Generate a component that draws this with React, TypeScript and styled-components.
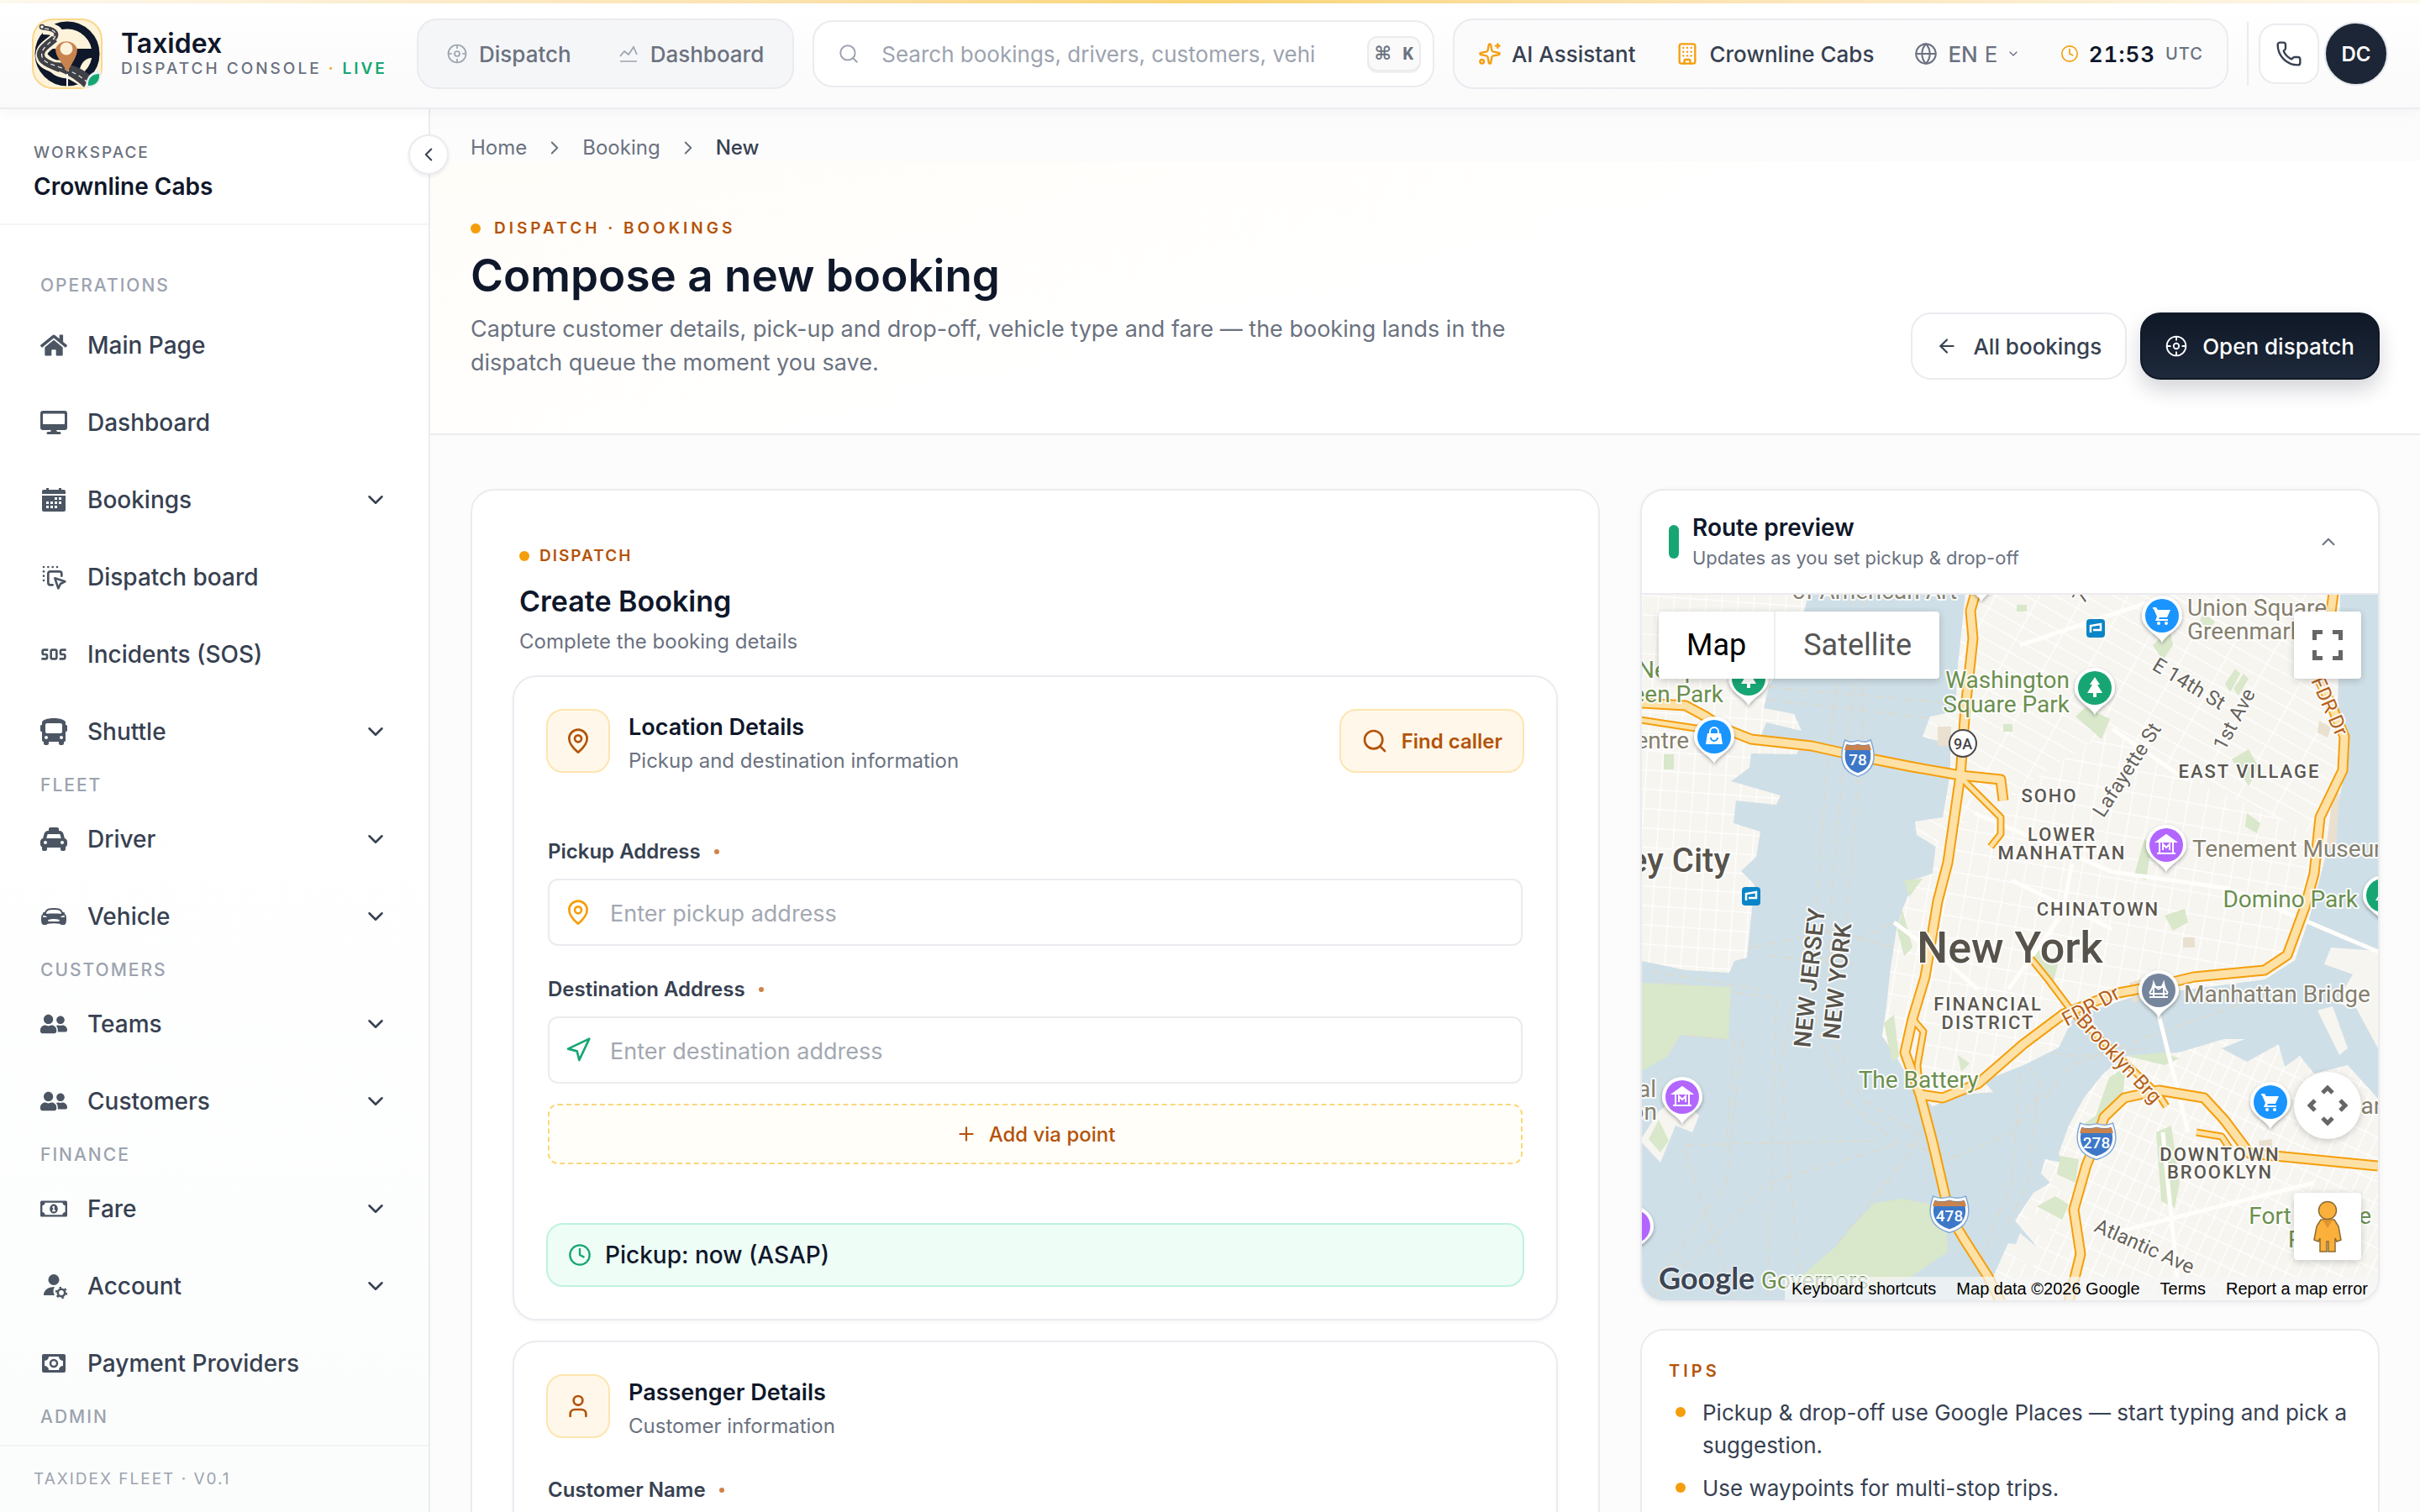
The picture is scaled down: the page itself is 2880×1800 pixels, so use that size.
import React from "react";
import styled, { createGlobalStyle, css } from "styled-components";
import {
  ArrowLeft, Building, ChevronDown, ChevronLeft, ChevronRight, ChevronUp, Clock, Globe,
  MapPin, Navigation, Phone, Plus, Search, Sparkles, User,
} from "lucide-react";
import { FaHome, FaBus, FaTaxi, FaUserFriends, FaRegMoneyBillAlt } from "react-icons/fa";
import { IoCarSport } from "react-icons/io5";
import { MdSos } from "react-icons/md";
import { TbDragDrop } from "react-icons/tb";

const ink = "#0f172a";
const slate = "#374151";
const muted = "#6b7280";
const faint = "#9ca3af";
const line = "#ebebf0";
const amber = "#f59e0b";
const rust = "#b45309";
const green = "#17a673";

const GlobalStyle = createGlobalStyle`
  * { box-sizing: border-box; }
  body {
    margin: 0;
    font-family: Inter, "Liberation Sans", sans-serif;
    font-size: 28px;
    color: ${ink};
    background: #fcfcfc;
    -webkit-font-smoothing: antialiased;
  }
  button, input, select { font: inherit; color: inherit; margin: 0; }
  button { cursor: pointer; }
  a { color: inherit; text-decoration: none; }
  h1, h2, h3, p, ul { margin: 0; padding: 0; }
  ul { list-style: none; }
`;

/* ---------- shell ---------- */

const Shell = styled.div`
  display: flex;
  flex-direction: column;
  height: 100vh;
  overflow: hidden;
`;

const Body = styled.div`
  display: flex;
  flex: 1;
  min-height: 0;
`;

/* ---------- header ---------- */

const AccentBar = styled.div`
  height: 4px;
  flex: none;
  background: linear-gradient(90deg, #fffaf0 0%, #fde3ae 33%, #fbd777 50%, #fde3ae 67%, #fffaf0 100%);
`;

const Header = styled.header`
  display: flex;
  align-items: center;
  gap: 22px;
  flex: none;
  height: 126px;
  padding: 0 38px 4px;
  background: linear-gradient(#ffffff, #fafafb);
  border-bottom: 2px solid ${line};
  box-shadow: 0 4px 16px rgba(15, 23, 42, 0.04);
  position: relative;
  z-index: 2;
`;

const Brand = styled.a`
  display: flex;
  align-items: center;
  gap: 22px;
  width: 436px;
  flex: none;
`;

const BrandName = styled.div`
  font-size: 32px;
  line-height: 36px;
  font-weight: 600;
`;

const BrandTag = styled.div`
  font-size: 19px;
  line-height: 24px;
  font-weight: 500;
  letter-spacing: 3px;
  color: ${muted};
  white-space: nowrap;
  i { font-style: normal; color: ${amber}; }
  b { font-weight: 600; color: ${green}; }
`;

const Pill = styled.nav<{ $tone: string; $inset?: number }>`
  display: flex;
  align-items: center;
  gap: 4px;
  flex: none;
  height: 84px;
  padding: 0 ${(p) => p.$inset || 8}px;
  border: 2px solid ${line};
  border-radius: 24px;
  background: ${(p) => p.$tone};
`;

const pillItem = css`
  display: flex;
  align-items: center;
  gap: 12px;
  height: 64px;
  padding: 0 22px;
  border: 0;
  background: none;
  font-size: 26px;
  font-weight: 500;
  white-space: nowrap;
`;

const PillLink = styled.a`
  ${pillItem}
  gap: 14px;
  padding: 0 26px;
  color: ${muted};
  svg { color: ${faint}; }
`;

const PillButton = styled.button`
  ${pillItem}
  color: ${slate};
  svg { color: ${amber}; }
`;

const Language = styled.label`
  ${pillItem}
  color: ${muted};
  select {
    appearance: none;
    width: 18px;
    border: 0;
    padding: 0;
    margin: 0 -4px;
    background: none;
    color: ${muted};
    font-weight: 400;
  }
`;

const Time = styled.div`
  ${pillItem}
  b { font-weight: 600; letter-spacing: 1px; font-variant-numeric: tabular-nums; }
  span { font-size: 20px; letter-spacing: 1px; color: ${muted}; }
  svg { color: ${amber}; }
`;

const SearchBox = styled.label`
  display: flex;
  align-items: center;
  flex: 1;
  min-width: 0;
  height: 80px;
  padding: 0 14px 0 28px;
  border: 2px solid ${line};
  border-radius: 24px;
  background: #fff;
  color: ${faint};
  input {
    flex: 1;
    min-width: 0;
    margin: 0 48px 0 26px;
    padding: 0;
    border: 0;
    outline: 0;
    background: none;
    font-size: 26px;
  }
  input::placeholder { color: ${faint}; opacity: 1; }
  kbd {
    display: flex;
    align-items: center;
    justify-content: center;
    width: 64px;
    height: 42px;
    border: 2px solid ${line};
    border-radius: 12px;
    background: #fafafa;
    box-shadow: 0 2px 0 #f1f1f4;
    font: 600 22px "Liberation Mono", "DejaVu Sans", monospace;
    color: ${muted};
  }
`;

const HeaderEnd = styled.div`
  display: flex;
  align-items: center;
  gap: 6px;
  flex: none;
  padding-left: 12px;
  border-left: 2px solid ${line};
`;

const IconButton = styled.button`
  display: flex;
  align-items: center;
  justify-content: center;
  width: 72px;
  height: 72px;
  border: 2px solid ${line};
  border-radius: 20px;
  background: #fff;
  color: ${slate};
`;

const Avatar = styled.button`
  width: 76px;
  height: 76px;
  padding: 0;
  border: 2px solid #e3e5ea;
  border-radius: 50%;
  background: #1c2636;
  color: #fff;
  font-size: 24px;
  font-weight: 600;
`;

/* ---------- sidebar ---------- */

const Sidebar = styled.aside`
  display: flex;
  flex-direction: column;
  flex: none;
  width: 512px;
  position: relative;
  border-right: 2px solid ${line};
  background: linear-gradient(#ffffff 40%, #fbfdfc);
`;

const Workspace = styled.div`
  padding: 36px 40px 24px;
  border-bottom: 2px solid #f5f5f7;
`;

const Overline = styled.div`
  font-size: 19px;
  line-height: 32px;
  font-weight: 500;
  letter-spacing: 2px;
  color: ${muted};
`;

const WorkspaceName = styled.div`
  margin-top: 4px;
  font-size: 28px;
  line-height: 40px;
  font-weight: 600;
`;

const Collapse = styled.button`
  position: absolute;
  top: 30px;
  right: -24px;
  z-index: 1;
  display: flex;
  align-items: center;
  justify-content: center;
  width: 48px;
  height: 48px;
  padding: 0;
  border: 2px solid ${line};
  border-radius: 50%;
  background: #fff;
  box-shadow: 0 2px 4px rgba(15, 23, 42, 0.08);
  color: ${slate};
`;

const Nav = styled.nav`
  flex: 1;
  min-height: 0;
  overflow: hidden;
  padding: 54px 48px 0;
`;

const GroupLabel = styled.h3`
  font-size: 21px;
  line-height: 36px;
  font-weight: 500;
  letter-spacing: 2px;
  color: ${faint};
  &:first-child { margin-bottom: 7px; }
`;

const NavRow = styled.a`
  display: flex;
  align-items: center;
  height: 92px;
  font-size: 28px;
  font-weight: 500;
  color: ${slate};
  > svg:first-child { width: 32px; height: 32px; color: #4b5563; }
  span { flex: 1; margin-left: 24px; }
`;

const SideFooter = styled.div`
  padding: 22px 40px;
  border-top: 2px solid #f3f4f6;
  font-size: 19px;
  line-height: 34px;
  letter-spacing: 2px;
  color: ${faint};
`;

/* ---------- main ---------- */

const Main = styled.main`
  flex: 1;
  min-width: 0;
  overflow: hidden;
`;

const Crumbs = styled.nav`
  display: flex;
  align-items: center;
  gap: 20px;
  height: 62px;
  padding: 30px 48px 0;
  font-size: 24px;
  line-height: 32px;
  color: ${muted};
  b { font-weight: 500; color: ${slate}; }
`;

const Hero = styled.section`
  display: flex;
  align-items: flex-end;
  justify-content: space-between;
  padding: 64px 48px;
  border-bottom: 2px solid ${line};
  background: linear-gradient(165deg, #fffdf8 0%, #ffffff 50%);
`;

const Eyebrow = styled.div<{ $gap?: number }>`
  display: flex;
  align-items: center;
  gap: ${(p) => p.$gap || 12}px;
  font-size: 19px;
  line-height: 32px;
  font-weight: 600;
  letter-spacing: ${(p) => (p.$gap ? 4 : 2)}px;
  color: ${rust};
  &::before {
    content: "";
    width: 12px;
    height: 12px;
    border-radius: 50%;
    background: ${amber};
  }
`;

const Title = styled.h1`
  margin-top: 8px;
  font-size: 53px;
  line-height: 64px;
  font-weight: 600;
`;

const Lead = styled.p`
  max-width: 1280px;
  margin-top: 12px;
  font-size: 27px;
  line-height: 40px;
  color: ${muted};
`;

const Actions = styled.div`
  display: flex;
  gap: 16px;
  flex: none;
`;

const Action = styled.a<{ $dark?: boolean }>`
  display: flex;
  align-items: center;
  gap: 18px;
  height: 80px;
  padding: 0 28px;
  border: 2px solid ${(p) => (p.$dark ? "#111a28" : line)};
  border-radius: 24px;
  background: ${(p) => (p.$dark ? "linear-gradient(#0f1826, #1e293b)" : "#fff")};
  box-shadow: ${(p) => (p.$dark ? "0 12px 24px rgba(15, 23, 42, 0.18)" : "none")};
  color: ${(p) => (p.$dark ? "#fff" : slate)};
  font-size: 26px;
  font-weight: 500;
`;

const Columns = styled.div`
  display: grid;
  grid-template-columns: minmax(0, 1fr) 880px;
  align-items: start;
  gap: 48px;
  padding: 64px 48px;
`;

const Card = styled.section`
  border: 2px solid ${line};
  border-radius: 28px;
  background: #fff;
`;

const FormCard = styled(Card)`
  padding: 62px 48px 48px;
`;

const FormHead = styled.div`
  padding: 0 8px;
  margin-bottom: 24px;
  h2 { margin-top: 16px; font-size: 34px; line-height: 44px; font-weight: 600; }
  p { margin-top: 10px; font-size: 24px; line-height: 32px; color: ${muted}; }
`;

const Panel = styled(Card)`
  padding: 38px;
  box-shadow: 0 2px 4px rgba(15, 23, 42, 0.04);
  & + & { margin-top: 24px; }
`;

const PanelHead = styled.div`
  display: flex;
  align-items: flex-start;
  gap: 22px;
`;

const Tile = styled.div`
  display: flex;
  align-items: center;
  justify-content: center;
  flex: none;
  width: 76px;
  height: 76px;
  border: 2px solid #fde5b0;
  border-radius: 20px;
  background: #fff8ea;
  color: ${rust};
`;

const PanelTitle = styled.div`
  flex: 1;
  padding-top: 4px;
  h3 { font-size: 27px; line-height: 36px; font-weight: 600; }
  p { margin-top: 4px; font-size: 24px; line-height: 36px; color: ${muted}; }
`;

const FindCaller = styled.button`
  display: flex;
  align-items: center;
  gap: 16px;
  height: 76px;
  padding: 0 24px;
  border: 2px solid #fde5b0;
  border-radius: 20px;
  background: #fff8ea;
  color: ${rust};
  font-size: 24px;
  font-weight: 600;
`;

const Fields = styled.div<{ $top: number }>`
  display: flex;
  flex-direction: column;
  padding: 0 2px;
  margin-top: ${(p) => p.$top}px;
`;

const Label = styled.label`
  display: flex;
  align-items: center;
  gap: 16px;
  margin-bottom: 16px;
  font-size: 24px;
  line-height: 32px;
  font-weight: 600;
  color: ${slate};
  &::after {
    content: "";
    width: 6px;
    height: 6px;
    border-radius: 50%;
    background: #d0824a;
  }
`;

const Control = styled.div<{ $color: string }>`
  display: flex;
  align-items: center;
  gap: 22px;
  height: 80px;
  margin-bottom: 36px;
  padding: 0 18px;
  border: 2px solid ${line};
  border-radius: 12px;
  background: #fff;
  color: ${(p) => p.$color};
  input {
    flex: 1;
    padding: 2px 0 0;
    border: 0;
    outline: 0;
    background: none;
    font-size: 27px;
    color: ${ink};
  }
  input::placeholder { color: #a3a8b1; opacity: 1; }
  &:has(+ button) { margin-bottom: 24px; }
`;

const AddVia = styled.button`
  display: flex;
  align-items: center;
  justify-content: center;
  gap: 14px;
  height: 72px;
  border: 2px dashed #fbd77c;
  border-radius: 12px;
  background: #fffef9;
  color: ${rust};
  font-size: 24px;
  font-weight: 500;
`;

const PickupNow = styled.button`
  display: flex;
  align-items: center;
  gap: 16px;
  width: 100%;
  height: 76px;
  margin-top: 70px;
  padding: 0 24px;
  border: 2px solid #bff3dd;
  border-radius: 20px;
  background: #effdf7;
  font-size: 28px;
  font-weight: 500;
  svg { color: ${green}; }
`;

/* ---------- right column ---------- */

const Aside = styled.div`
  display: flex;
  flex-direction: column;
  gap: 32px;
`;

const MapCard = styled(Card)`
  overflow: hidden;
  box-shadow: 0 2px 6px rgba(15, 23, 42, 0.06);
`;

const MapHead = styled.div`
  display: flex;
  align-items: center;
  gap: 16px;
  padding: 26px 46px 26px 32px;
  border-bottom: 2px solid ${line};
  &::before {
    content: "";
    width: 12px;
    height: 40px;
    border-radius: 6px;
    background: ${green};
  }
  h2 { font-size: 28px; line-height: 36px; font-weight: 600; }
  p { margin-top: 2px; font-size: 22px; line-height: 32px; color: ${muted}; }
  div { flex: 1; }
  button { display: flex; padding: 0; border: 0; background: none; color: ${muted}; }
`;

const MapArea = styled.div`
  position: relative;
  height: 840px;
  overflow: hidden;
  background: #cfdfe7;
  font-family: Roboto, sans-serif;
  > svg { display: block; width: 100%; height: 100%; }
`;

const MapTypes = styled.div`
  position: absolute;
  top: 20px;
  left: 20px;
  display: flex;
  border-radius: 4px;
  background: #fff;
  box-shadow: 0 2px 8px rgba(0, 0, 0, 0.2);
  button {
    height: 80px;
    padding: 0 33px;
    border: 0;
    background: none;
    font-size: 36px;
    color: #565656;
  }
  button:first-child { color: #000; border-right: 2px solid #eceef2; }
`;

const MapButton = styled.button<{ $top: number; $round?: boolean }>`
  position: absolute;
  top: ${(p) => p.$top}px;
  right: 20px;
  display: flex;
  align-items: center;
  justify-content: center;
  width: 80px;
  height: 80px;
  padding: 0;
  border: 0;
  border-radius: ${(p) => (p.$round ? "50%" : "4px")};
  background: #fff;
  box-shadow: 0 2px 8px rgba(0, 0, 0, 0.2);
`;

const Attribution = styled.div`
  position: absolute;
  right: 0;
  bottom: 0;
  display: flex;
  gap: 24px;
  height: 28px;
  padding: 0 12px 0 8px;
  background: rgba(245, 246, 247, 0.72);
  font-family: "Liberation Sans", Arial, sans-serif;
  font-size: 20px;
  line-height: 28px;
  color: #000;
  white-space: nowrap;
  button { padding: 0; border: 0; background: none; line-height: 28px; }
`;

const MapLogo = styled.a`
  position: absolute;
  left: 20px;
  bottom: 6px;
  font-family: Lato, sans-serif;
  font-size: 36px;
  line-height: 42px;
  font-weight: 700;
  color: #3c4654;
  text-shadow: 0 0 3px #fff, 0 0 3px #fff, 0 0 2px #fff;
`;

const TipsCard = styled(Card)`
  padding: 32px;
  h2 { font-size: 20px; line-height: 32px; font-weight: 600; letter-spacing: 4px; color: ${rust}; }
  ul { display: flex; flex-direction: column; gap: 12px; margin-top: 14px; }
  li {
    position: relative;
    padding-left: 40px;
    font-size: 26px;
    line-height: 39px;
    color: ${slate};
  }
  li::before {
    content: "";
    position: absolute;
    left: 8px;
    top: 13px;
    width: 12px;
    height: 12px;
    border-radius: 50%;
    background: ${amber};
  }
`;

/* ---------- drawings ---------- */

const Logo = () => (
  <svg width="84" height="84" viewBox="0 0 84 84" aria-hidden="true">
    <rect x="1" y="1" width="82" height="82" rx="24" fill="#fdf3da" stroke="#fbd78a" strokeWidth="2" />
    <circle cx="42" cy="42" r="34" fill="none" stroke="#0f172a" strokeWidth="9" />
    <path d="M46 36 L76 36 L76 47 C66 46 60 50 57 60 L48 66 L40 50 Z" fill="#0f172a" />
    <path d="M18 36 L34 36 L38 48 C30 52 24 48 18 42 Z" fill="#0f172a" />
    <path d="M13 12 C27 12 34 16 28 24 C20 32 8 36 12 48 C18 60 44 58 68 80" fill="none" stroke="#fdf3da" strokeWidth="14" />
    <path d="M12 11 C27 12 32 17 27 24" fill="none" stroke="#3f4147" strokeWidth="5" />
    <path d="M27 24 C18 32 6 38 12 48 C16 54 26 56 34 60" fill="none" stroke="#3f4147" strokeWidth="9" />
    <path d="M24 52 C42 52 58 58 70 68 L62 82 C52 72 38 64 20 58 Z" fill="#3f4147" />
    <path d="M15 12 C27 13 31 17 26 24 C17 33 8 38 13 48 C20 58 44 56 66 76" fill="none" stroke="#fff" strokeWidth="1.2" strokeDasharray="5 4" />
    <circle cx="12" cy="10" r="2.5" fill="#fff" stroke="#3f4147" strokeWidth="1.5" />
    <path d="M42 64 C36 52 28 46 28 36 A14 14 0 0 1 54 36 C54 46 48 52 42 64 Z" fill="#c9834e" />
    <circle cx="41" cy="36" r="7.5" fill="#fdf3da" />
    <path d="M42 66 V81" stroke="#fff" strokeWidth="2" />
    <path d="M64 82 C64 68 72 62 82 62 L82 68 C82 76 76 82 68 82 Z" fill="#e8f1f4" />
    <path d="M67 80 C66 71 72 66 80 66 C81 74 76 80 67 80 Z" fill="#17a673" />
  </svg>
);

const Radar = ({ size = 24 }: { size?: number }) => (
  <svg width={size} height={size} viewBox="0 0 24 24" fill="none" stroke="currentColor" strokeWidth="1.7" aria-hidden="true">
    <circle cx="12" cy="12" r="10.5" />
    <circle cx="12" cy="12" r="3" />
    <path d="M12 1.5V6M12 18v4.5M1.5 12H6M18 12h4.5" />
  </svg>
);

const Trend = () => (
  <svg width="24" height="24" viewBox="0 0 24 24" fill="none" stroke="currentColor" strokeWidth="1.7" aria-hidden="true">
    <path d="M2 21h20M2 15l5-6 5 4 6-9 4 9" />
  </svg>
);

const MonitorIcon = () => (
  <svg viewBox="0 0 32 32" fill="currentColor" aria-hidden="true">
    <path fillRule="evenodd" d="M3 2h26a3 3 0 0 1 3 3v17a3 3 0 0 1-3 3H19l1 2h3a1.500 1.500 0 0 1 0 3H9a1.500 1.500 0 0 1 0-3h3l1-2H3a3 3 0 0 1-3-3V5a3 3 0 0 1 3-3zM4 5.500a1 1 0 0 0-1 1V17a1 1 0 0 0 1 1h24a1 1 0 0 0 1-1V6.500a1 1 0 0 0-1-1z" />
  </svg>
);

const CalendarIcon = () => (
  <svg viewBox="0 0 32 32" fill="currentColor" aria-hidden="true">
    <path d="M7 2h3v2h12V2h3v2h3a2 2 0 0 1 2 2v3H2V6a2 2 0 0 1 2-2h3z" />
    <path fillRule="evenodd" d="M2 11h28v17a2 2 0 0 1-2 2H4a2 2 0 0 1-2-2zM17 13v3h3v-3zM22 13v3h3v-3zM7 18v3h3v-3zM12 18v3h3v-3zM17 18v3h3v-3zM22 18v3h3v-3zM7 23v3h3v-3zM12 23v3h3v-3zM17 23v3h3v-3z" />
  </svg>
);

const AccountIcon = () => (
  <svg viewBox="0 0 32 32" fill="currentColor" aria-hidden="true">
    <circle cx="16" cy="8.500" r="6.500" />
    <path d="M4 27c0-6 5-10 13-10-2 3-2 7 0 10z" />
    <circle cx="25" cy="24" r="4.200" fill="none" stroke="currentColor" strokeWidth="2.600" />
    <circle cx="25" cy="24" r="6.300" fill="none" stroke="currentColor" strokeWidth="2" strokeDasharray="2.600 4" />
  </svg>
);

const CashIcon = () => (
  <svg viewBox="0 0 32 32" aria-hidden="true">
    <rect x="2" y="5" width="28" height="22" rx="2" fill="currentColor" />
    <path d="M10 8h12a5 5 0 0 0 5 5v6a5 5 0 0 0-5 5H10a5 5 0 0 0-5-5v-6a5 5 0 0 0 5-5z" fill="#fff" />
    <circle cx="16" cy="16" r="4" fill="none" stroke="currentColor" strokeWidth="2.5" />
  </svg>
);

type PinKind = "cart" | "tree" | "museum" | "bag" | "bridge" | "none";
const pinColors: Record<PinKind, string> = {
  cart: "#1a94ff", tree: "#17a673", museum: "#b266ff", bag: "#1a94ff", bridge: "#75859b", none: "#b266ff",
};

const glyphs: Record<PinKind, React.ReactNode> = {
  cart: (
    <g fill="#fff">
      <path d="M-11-10h4l2 3h15l-4 9h-9l-1 2h11v2H-8l2-5-4-9h-1z" />
      <circle cx="-4" cy="9" r="2" /><circle cx="5" cy="9" r="2" />
    </g>
  ),
  tree: <path d="M0-13L6-4H3L9 6H2v5h-4V6h-7l6-10h-3z" fill="#fff" />,
  museum: (
    <g fill="none" stroke="#fff" strokeWidth="2">
      <path d="M-11-4L0-12 11-4z" fill="#fff" />
      <path d="M-8-3V9M8-3V9M-11 10h22M-4 6V-1l4 4 4-4v7" />
    </g>
  ),
  bag: (
    <g>
      <path d="M-8-4H8L10 9h-20z" fill="#fff" />
      <path d="M-5-3v-3a5 5 0 0 1 10 0v3" fill="none" stroke="#fff" strokeWidth="2" />
      <path d="M-4 1a4 4 0 0 0 8 0" fill="none" stroke="#1a94ff" strokeWidth="2" />
    </g>
  ),
  bridge: <path d="M-6-10V9M6-10V9M-11 4h22M-6-4H6M-11 8h22M-11 3Q-7-2-6-9Q0 6 6-9Q7-2 11 3" fill="none" stroke="#fff" strokeWidth="2" />,
  none: null,
};

const Pin = ({ x, y, kind }: { x: number; y: number; kind: PinKind }) => (
  <g transform={`translate(${x} ${y})`}>
    <path d="M0 32C-4 22-24 16-24 0a24 24 0 0 1 48 0c0 16-20 22-24 32z" fill="#fff" filter="url(#drop)" />
    <circle r="20" fill={pinColors[kind]} />
    {glyphs[kind]}
  </g>
);

const Shield = ({ x, y, n, w = 20 }: { x: number; y: number; n: string; w?: number }) => {
  const shape = `M${-w + 2}-18Q${-w / 2}-15 0-18Q${w / 2}-15 ${w - 2}-18Q${w + 8} 12 0 20Q${-w - 8} 12 ${-w + 2}-18z`;
  return (
    <g transform={`translate(${x} ${y})`}>
      <path d={shape} fill="#3d78c8" stroke="#7fa9d8" strokeWidth="6" />
      <path d={shape} fill="#3d78c8" stroke="#fff" strokeWidth="3" />
      <path d={`M${-w + 2}-16Q${-w / 2}-13 0-16Q${w / 2}-13 ${w - 2}-16L${w}-9H${-w}z`} fill="#c9834e" />
      <text y="9" fontSize="19" fontWeight="500" fill="#fff" textAnchor="middle">{n}</text>
    </g>
  );
};

const Transit = ({ x, y }: { x: number; y: number }) => (
  <g transform={`translate(${x} ${y})`}>
    <rect width="22" height="22" rx="4" fill="#0a85c7" />
    <path d="M5 16V8l12-2v7H8" fill="none" stroke="#fff" strokeWidth="2.5" />
  </g>
);

type Spot = { t: string; x: number; y: number; k: "area" | "park" | "poi" | "city" | "road" | "hwy" | "state"; r?: number; s?: number; a?: "start" | "end" | "middle" };

const spots: Spot[] = [
  { t: "of American Art", x: 277, y: 5, k: "poi", a: "middle" },
  { t: "Union Square", x: 649, y: 25, k: "poi" },
  { t: "Greenmarket", x: 649, y: 53, k: "poi" },
  { t: "7th", x: 526, y: 12, k: "road", r: -60 },
  { t: "Washington", x: 509, y: 111, k: "park", a: "end" },
  { t: "Square Park", x: 509, y: 140, k: "park", a: "end" },
  { t: "Newport", x: -5, y: 99, k: "park" },
  { t: "Green Park", x: 97, y: 128, k: "park", a: "end" },
  { t: "Centre", x: 56, y: 183, k: "poi", a: "end" },
  { t: "E 14th St", x: 647, y: 113, k: "road", r: 31, a: "middle" },
  { t: "1st Ave", x: 712, y: 152, k: "road", r: -62, a: "middle" },
  { t: "Lafayette St", x: 584, y: 213, k: "road", r: -57, a: "middle" },
  { t: "FDR Dr", x: 811, y: 136, k: "hwy", r: 66, a: "middle" },
  { t: "EAST VILLAGE", x: 723, y: 218, k: "area", a: "middle" },
  { t: "SOHO", x: 485, y: 247, k: "area", a: "middle" },
  { t: "LOWER", x: 500, y: 293, k: "area", a: "middle" },
  { t: "MANHATTAN", x: 500, y: 315, k: "area", a: "middle" },
  { t: "Tenement Museum", x: 655, y: 312, k: "poi" },
  { t: "Jersey City", x: 105, y: 330, k: "city", s: 40, a: "end" },
  { t: "Domino Park", x: 852, y: 372, k: "park", a: "end" },
  { t: "CHINATOWN", x: 543, y: 382, k: "area", a: "middle" },
  { t: "New York", x: 438, y: 438, k: "city", s: 52, a: "middle" },
  { t: "NEW JERSEY", x: 209, y: 457, k: "state", r: -84, a: "middle" },
  { t: "NEW YORK", x: 242, y: 461, k: "state", r: -84, a: "middle" },
  { t: "FINANCIAL", x: 412, y: 495, k: "area", a: "middle" },
  { t: "DISTRICT", x: 412, y: 517, k: "area", a: "middle" },
  { t: "FDR Dr", x: 538, y: 497, k: "hwy", r: -28, a: "middle" },
  { t: "Brooklyn Brg", x: 562, y: 558, k: "hwy", r: 47, a: "middle" },
  { t: "Manhattan Bridge", x: 645, y: 485, k: "poi" },
  { t: "The Battery", x: 329, y: 587, k: "park", a: "middle" },
  { t: "al", x: 17, y: 598, k: "poi", a: "end" },
  { t: "on", x: 18, y: 625, k: "poi", a: "end" },
  { t: "Bar", x: 838, y: 618, k: "poi" },
  { t: "DOWNTOWN", x: 688, y: 674, k: "area", a: "middle" },
  { t: "BROOKLYN", x: 688, y: 695, k: "area", a: "middle" },
  { t: "Atlantic Ave", x: 595, y: 783, k: "road", r: 24, a: "middle" },
  { t: "Fort Greene", x: 868, y: 749, k: "park", a: "end" },
  { t: "Park", x: 769, y: 777, k: "park" },
  { t: "Governors", x: 142, y: 826, k: "park" },
];

const spotStyle = {
  area: { fontSize: 22, fontWeight: 500, fill: "#5b5850", letterSpacing: 2 },
  park: { fontSize: 28, fontWeight: 400, fill: "#6b8f4e" },
  poi: { fontSize: 28, fontWeight: 400, fill: "#857f6e" },
  city: { fontSize: 40, fontWeight: 500, fill: "#57534b" },
  road: { fontSize: 24, fontWeight: 400, fill: "#66625a" },
  hwy: { fontSize: 24, fontWeight: 400, fill: "#b4601c" },
  state: { fontSize: 28, fontWeight: 500, fill: "#57534b" },
};

const highways = [
  "M397-2L391 19 394 52 385 135 379 215 364 319 352 365 337 455 322 505 313 545 331 595 346 652 366 738 382 765 412 812 427 842",
  "M-2 129L52 132 76 145 97 159 130 172 202 180 256 192 322 205 379 215 427 220 430 245",
  "M-2 149L64 159 97 159",
  "M379 217L427 265 427 285 415 300",
  "M331 595L358 599 400 582 454 535 502 499 562 475 615 465 657 455 741 447 768 429 789 372 800 332 807 265 834 209 836 169 822 135 807 102 816 52 823-2",
  "M463 433L484 459 514 499 615 595 624 609",
  "M508 842L522 785 514 732 529 679 541 650 550 622 574 599 615 590 669 599 693 625 723 665 876 680",
  "M322 505L335 520 328 560 331 595",
  "M660 640L690 645 700 660M690 625L705 640",
];

const manhattan = "M385-2L376 85 373 139 343 145 334 169 367 178 367 212 358 265 325 270 327 286 350 300 346 332 325 339 310 375 303 400 296 445 291 492 286 525 304 552 325 589 346 609 376 595 418 592 406 579 454 560 496 539 514 502 586 478 741 458 777 435 795 382 816 302 828 252 842 185 828 135 831-2z";
const jersey = "M-2-2H199L190 30 151 110 145 135 181 142 190 162 148 152 140 172 190 178 184 190 130 189 128 206 106 222 165 239 160 250 112 245 109 272 141 282 136 312 118 329 134 345 125 432 110 436 104 450 52 447 20 440-2 436z";
const brooklyn = "M577 549L639 545 693 529 756 529 765 562 783 549 800 570 840 560 876 600V842H400L418 812 436 772 470 776 444 745 466 712 486 700 475 689 480 672 500 676 496 665 508 632 526 599 550 569z";

const MapDrawing = () => (
  <svg viewBox="0 0 876 840" preserveAspectRatio="xMidYMid slice" role="img" aria-label="Map of New York">
    <defs>
      <filter id="drop" x="-30%" y="-30%" width="160%" height="160%">
        <feDropShadow dx="0" dy="2" stdDeviation="2" floodOpacity="0.35" />
      </filter>
      <pattern id="gridA" width="46" height="17" patternUnits="userSpaceOnUse" patternTransform="rotate(29)">
        <path d="M0 0H46M0 0V17" stroke="#fff" strokeWidth="2.5" />
      </pattern>
      <pattern id="gridB" width="24" height="15" patternUnits="userSpaceOnUse" patternTransform="rotate(-65)">
        <path d="M0 0H24M0 0V15" stroke="#fff" strokeWidth="2.5" />
      </pattern>
      <pattern id="gridC" width="22" height="26" patternUnits="userSpaceOnUse" patternTransform="rotate(10)">
        <path d="M0 0H22M0 0V26" stroke="#fff" strokeWidth="2.5" />
      </pattern>
      <pattern id="gridD" width="19" height="23" patternUnits="userSpaceOnUse" patternTransform="rotate(4)">
        <path d="M0 0H19M0 0V23" stroke="#fff" strokeWidth="2.5" />
      </pattern>
      <clipPath id="lower"><path d="M340 300L560 160 640 215 835 300V620H280V300z" /></clipPath>
    </defs>
    <rect width="876" height="840" fill="#cfdfe7" />
    <g fill="none" stroke="#dcd9cd" strokeWidth="1.5" strokeDasharray="12 6">
      <path d="M250 0L222 180 205 420 208 520 240 600 300 650 370 670 440 640 476 590 450 540" />
      <path d="M270 0L240 200 220 430 224 520 262 600 340 650M262 0L262 180 236 460" />
      <path d="M130 420L230 400 300 420M150 430L260 440M20 460L160 480 150 840M-2 520L110 530 100 660" />
      <path d="M50 655L280 650M50 660L110 840M300 655L150 700 10 840M330 650L180 840M450 570L440 700 400 800" />
      <path d="M452 540L520 550 600 540M470 600L460 700 430 760M480 600L510 560 620 520 760 470" />
      <path d="M150 110L380 130M150 125L370 150M190 445L300 390M10 448L140 470" />
      <path d="M190 840L165 560 180 480M120 530L100 700 10 830" />
    </g>
    <path d={jersey} fill="#f7f5f0" />
    <path d={jersey} fill="url(#gridD)" />
    <path d={manhattan} fill="#f7f5f0" />
    <path d={manhattan} fill="url(#gridA)" />
    <path d={manhattan} fill="#f7f5f0" clipPath="url(#lower)" />
    <path d={manhattan} fill="url(#gridC)" clipPath="url(#lower)" />
    <path d={brooklyn} fill="#f7f5f0" />
    <path d={brooklyn} fill="url(#gridB)" />
    <path d="M876 424L820 420 812 440 846 452 826 486 850 492 876 540zM804 495L822 490 840 540 830 548z" fill="#f7f5f0" />
    <g fill="#f7f5f0">
      <path d="M464 735L490 748 478 764 452 756zM450 760L474 780 464 800 440 786zM500 690L530 700 520 718 494 708z" />
      <path d="M690 540L790 500 800 512 720 556z" fill="#cfdfe7" />
      <path d="M-2 650L20 615 44 598 68 620 60 640 40 632 22 676z" />
    </g>
    <g fill="#d9e7ca">
      <path d="M-2 462L106 467 103 529 46 524 30 550-2 568z" />
      <path d="M277 724L310 719 361 729 364 782 320 812 244 836 184 816 232 775 250 752z" />
      <path d="M8 648L20 625 32 650 22 664z" />
      <path d="M288 510L300 500 306 550 298 556zM310 375L322 420 312 430 304 400zM312 340L334 338 318 360z" />
      <path d="M516 145L528 134 557 148 547 172zM702 196L722 184 734 205 722 228z" />
      <path d="M446 12H458V20H446zM430 154H441V163H430zM608 60L628 40 632 60 620 78zM668 22L682 32 674 44 664 30z" />
      <path d="M694 106L706 88 712 94 700 116zM704 112L716 94 722 100 710 120zM26 190H38V208H26z" />
      <path d="M622 382L646 374 650 390 632 400zM586 334L598 290 606 300 600 340zM466 420L496 436 490 460 470 444z" />
      <path d="M556 575L576 562 572 600 545 640 524 650 518 636 540 620zM577 549L620 545 640 552 622 560zM498 668L520 672 516 700 494 690z" />
      <path d="M612 640L630 632 640 700 634 730 618 722zM376 548L390 558 380 568zM720 260L736 272 732 284 718 276z" />
      <path d="M470 728L492 716 508 726 500 744z" />
    </g>
    <g fill="#e9e0d0">
      <path d="M352 157H368V180H352zM806 150L820 158 816 170 804 164zM822 240L830 236 826 300 814 304z" />
      <path d="M644 408H658V420H644zM580 462L594 458 598 480 584 486zM734 650L750 648V664H736z" />
    </g>
    <path d="M705 352L876 425M615 500L650 640M300 390L366 440 400 470M440 340L560 398M436 470L500 380 512 320M560 160L640 215M450 60L600 10M396 260L560 330 700 350M620 640L640 840M560 760L800 700" fill="none" stroke="#fffefb" strokeWidth="5" />
    <g fill="none" stroke={amber} strokeLinejoin="round">{highways.map((d) => <path key={d} d={d} strokeWidth={d.length > 60 ? 13 : 9} />)}</g>
    <g fill="none" stroke="#fde1a6" strokeLinejoin="round">{highways.map((d) => <path key={d} d={d} strokeWidth={d.length > 60 ? 9 : 5} />)}</g>
    <g stroke="#fff" strokeWidth="4" strokeLinejoin="round" paintOrder="stroke" strokeOpacity="0.85">
      {spots.map((s) => (
        <text
          key={s.t + s.x}
          x={s.x}
          y={s.y}
          textAnchor={s.a || "start"}
          transform={s.r ? `rotate(${s.r} ${s.x} ${s.y})` : undefined}
          {...spotStyle[s.k]}
          fontSize={s.s || spotStyle[s.k].fontSize}
        >
          {s.t}
        </text>
      ))}
    </g>
    <Transit x={529} y={29} />
    <Transit x={119} y={348} />
    <circle cx="382" cy="177" r="16" fill="#fff" stroke="#4b4b4b" strokeWidth="2" />
    <text x="382" y="184" fontSize="18" fontWeight="500" fill="#444" textAnchor="middle">9A</text>
    <Shield x={257} y={194} n="78" w={16} />
    <Shield x={541} y={650} n="278" />
    <Shield x={366} y={737} n="478" />
    <Pin x={404} y={-24} kind="museum" />
    <Pin x={619} y={25} kind="cart" />
    <Pin x={539} y={111} kind="tree" />
    <Pin x={127} y={100} kind="tree" />
    <Pin x={86} y={169} kind="bag" />
    <Pin x={624} y={298} kind="museum" />
    <Pin x={882} y={358} kind="tree" />
    <Pin x={615} y={471} kind="bridge" />
    <Pin x={48} y={598} kind="museum" />
    <Pin x={748} y={604} kind="cart" />
    <Pin x={-10} y={752} kind="none" />
  </svg>
);

/* ---------- sections ---------- */

type Item = { label: string; icon: React.ReactNode; more?: boolean };
const groups: { name: string; items: Item[] }[] = [
  {
    name: "OPERATIONS",
    items: [
      { label: "Main Page", icon: <FaHome /> },
      { label: "Dashboard", icon: <MonitorIcon /> },
      { label: "Bookings", icon: <CalendarIcon />, more: true },
      { label: "Dispatch board", icon: <TbDragDrop /> },
      { label: "Incidents (SOS)", icon: <MdSos /> },
      { label: "Shuttle", icon: <FaBus />, more: true },
    ],
  },
  { name: "FLEET", items: [{ label: "Driver", icon: <FaTaxi />, more: true }, { label: "Vehicle", icon: <IoCarSport />, more: true }] },
  { name: "CUSTOMERS", items: [{ label: "Teams", icon: <FaUserFriends />, more: true }, { label: "Customers", icon: <FaUserFriends />, more: true }] },
  {
    name: "FINANCE",
    items: [
      { label: "Fare", icon: <FaRegMoneyBillAlt />, more: true },
      { label: "Account", icon: <AccountIcon />, more: true },
      { label: "Payment Providers", icon: <CashIcon /> },
    ],
  },
  { name: "ADMIN", items: [] },
];

const TopBar = () => (
  <Header>
    <Brand href="#home">
      <Logo />
      <div>
        <BrandName>Taxidex</BrandName>
        <BrandTag>DISPATCH CONSOLE <i>·</i> <b>LIVE</b></BrandTag>
      </div>
    </Brand>
    <Pill $tone="#f5f6f8">
      <PillLink href="#dispatch"><Radar />Dispatch</PillLink>
      <PillLink href="#dashboard"><Trend />Dashboard</PillLink>
    </Pill>
    <SearchBox>
      <Search size={26} strokeWidth={1.8} />
      <input aria-label="Search" placeholder="Search bookings, drivers, customers, vehi" />
      <kbd>⌘ K</kbd>
    </SearchBox>
    <Pill as="div" $tone="#fbfbfc" $inset={6}>
      <PillButton><Sparkles size={28} />AI Assistant</PillButton>
      <PillButton><Building size={28} />Crownline Cabs</PillButton>
      <Language>
        <Globe size={28} strokeWidth={1.8} />EN
        <select aria-label="Language"><option>E</option></select>
        <ChevronDown size={16} />
      </Language>
      <Time><Clock size={22} strokeWidth={1.8} /><b>21:53</b><span>UTC</span></Time>
    </Pill>
    <HeaderEnd>
      <IconButton aria-label="Call"><Phone size={32} strokeWidth={1.8} /></IconButton>
      <Avatar>DC</Avatar>
    </HeaderEnd>
  </Header>
);

const SideBar = () => (
  <Sidebar>
    <Workspace>
      <Overline>WORKSPACE</Overline>
      <WorkspaceName>Crownline Cabs</WorkspaceName>
    </Workspace>
    <Collapse aria-label="Collapse sidebar"><ChevronLeft size={26} strokeWidth={1.8} /></Collapse>
    <Nav>
      {groups.map((g) => (
        <React.Fragment key={g.name}>
          <GroupLabel>{g.name}</GroupLabel>
          {g.items.map((it) => (
            <NavRow key={it.label} href="#nav">
              {it.icon}
              <span>{it.label}</span>
              {it.more && <ChevronDown size={30} />}
            </NavRow>
          ))}
        </React.Fragment>
      ))}
    </Nav>
    <SideFooter>TAXIDEX FLEET · V0.1</SideFooter>
  </Sidebar>
);

export default function App() {
  return (
    <Shell>
      <GlobalStyle />
      <AccentBar />
      <TopBar />
      <Body>
        <SideBar />
        <Main>
          <Crumbs aria-label="Breadcrumb">
            <a href="#home">Home</a>
            <ChevronRight size={26} strokeWidth={1.8} />
            <a href="#booking">Booking</a>
            <ChevronRight size={26} strokeWidth={1.8} />
            <b>New</b>
          </Crumbs>
          <Hero>
            <div>
              <Eyebrow $gap={16}>DISPATCH · BOOKINGS</Eyebrow>
              <Title>Compose a new booking</Title>
              <Lead>
                Capture customer details, pick-up and drop-off, vehicle type and fare — the booking lands in the
                dispatch queue the moment you save.
              </Lead>
            </div>
            <Actions>
              <Action href="#bookings"><ArrowLeft size={26} />All bookings</Action>
              <Action href="#dispatch" $dark><Radar size={26} />Open dispatch</Action>
            </Actions>
          </Hero>
          <Columns>
            <FormCard>
              <FormHead>
                <Eyebrow>DISPATCH</Eyebrow>
                <h2>Create Booking</h2>
                <p>Complete the booking details</p>
              </FormHead>
              <Panel>
                <PanelHead>
                  <Tile><MapPin size={32} /></Tile>
                  <PanelTitle>
                    <h3>Location Details</h3>
                    <p>Pickup and destination information</p>
                  </PanelTitle>
                  <FindCaller><Search size={32} />Find caller</FindCaller>
                </PanelHead>
                <Fields $top={74}>
                  <Label htmlFor="pickup">Pickup Address</Label>
                  <Control $color={amber}>
                    <MapPin size={32} />
                    <input id="pickup" placeholder="Enter pickup address" />
                  </Control>
                  <Label htmlFor="destination">Destination Address</Label>
                  <Control $color={green}>
                    <Navigation size={32} />
                    <input id="destination" placeholder="Enter destination address" />
                  </Control>
                  <AddVia><Plus size={26} />Add via point</AddVia>
                </Fields>
                <PickupNow><Clock size={28} />Pickup: now (ASAP)</PickupNow>
              </Panel>
              <Panel>
                <PanelHead>
                  <Tile><User size={32} /></Tile>
                  <PanelTitle>
                    <h3>Passenger Details</h3>
                    <p>Customer information</p>
                  </PanelTitle>
                </PanelHead>
                <Fields $top={42}>
                  <Label htmlFor="customer">Customer Name</Label>
                  <Control $color={faint}>
                    <input id="customer" />
                  </Control>
                </Fields>
              </Panel>
            </FormCard>
            <Aside>
              <MapCard>
                <MapHead>
                  <div>
                    <h2>Route preview</h2>
                    <p>Updates as you set pickup &amp; drop-off</p>
                  </div>
                  <button aria-label="Collapse map"><ChevronUp size={26} strokeWidth={1.8} /></button>
                </MapHead>
                <MapArea>
                  <MapDrawing />
                  <MapTypes>
                    <button>Map</button>
                    <button>Satellite</button>
                  </MapTypes>
                  <MapButton $top={20} aria-label="Full screen">
                    <svg width="36" height="36" viewBox="0 0 36 36" fill="none" stroke="#666" strokeWidth="5">
                      <path d="M2.500 12V2.500H12M24 2.500h9.500V12M33.500 24v9.500H24M12 33.500H2.500V24" />
                    </svg>
                  </MapButton>
                  <MapButton $top={568} $round aria-label="Pan">
                    <svg width="48" height="48" viewBox="0 0 48 48" fill="none" stroke="#666" strokeWidth="5">
                      <path d="M18 9l6-6 6 6M18 39l6 6 6-6M9 18l-6 6 6 6M39 18l6 6-6 6" />
                    </svg>
                  </MapButton>
                  <MapButton $top={712} aria-label="Street view">
                    <svg width="36" height="64" viewBox="0 0 36 64" fill="#fbb03b" stroke="#8d6b33" strokeWidth="1.500">
                      <path d="M10 24h16l5 8 3 16-5 2-2-4v16h-8V50h-2v12H9V46l-2 4-5-2 3-16z" />
                      <path d="M12 24l6 10 6-10z" fill="#e0922f" stroke="none" />
                      <circle cx="18" cy="13" r="10.500" />
                    </svg>
                  </MapButton>
                  <MapLogo href="#map">Google</MapLogo>
                  <Attribution>
                    <button>Keyboard shortcuts</button>
                    <span>Map data ©2026 Google</span>
                    <a href="#terms">Terms</a>
                    <a href="#report">Report a map error</a>
                  </Attribution>
                </MapArea>
              </MapCard>
              <TipsCard>
                <h2>TIPS</h2>
                <ul>
                  <li>Pickup &amp; drop-off use Google Places — start typing and pick a suggestion.</li>
                  <li>Use waypoints for multi-stop trips.</li>
                </ul>
              </TipsCard>
            </Aside>
          </Columns>
        </Main>
      </Body>
    </Shell>
  );
}
